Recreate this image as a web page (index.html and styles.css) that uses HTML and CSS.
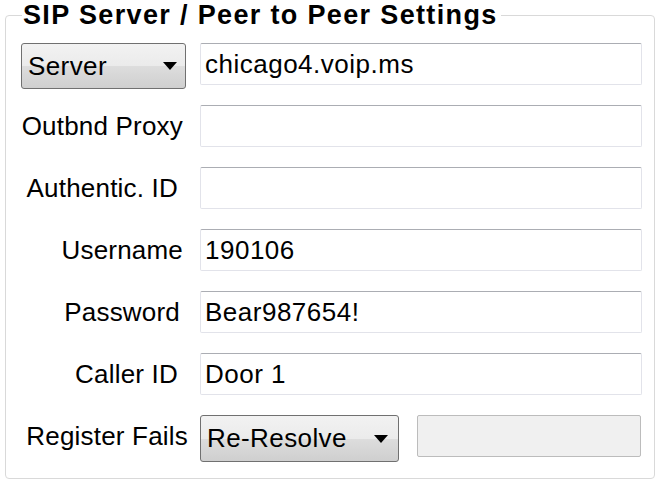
FILE: index.html
```html
<!DOCTYPE html>
<html>
<head>
<meta charset="utf-8">
<link rel="stylesheet" href="styles.css">
</head>
<body>
<fieldset class="group">
  <legend class="group-title">SIP Server / Peer to Peer Settings</legend>
  <div class="form">
    <div class="combo"><span class="combo-text">Server</span><span class="arrow"></span></div>
    <div class="field">chicago4.voip.ms</div>

    <div class="label">Outbnd Proxy</div>
    <div class="field"></div>

    <div class="label lbl-short">Authentic. ID</div>
    <div class="field"></div>

    <div class="label">Username</div>
    <div class="field">190106</div>

    <div class="label lbl-mid">Password</div>
    <div class="field">Bear987654!</div>

    <div class="label lbl-short">Caller ID</div>
    <div class="field">Door 1</div>

    <div class="label lbl-wide">Register Fails</div>
    <div class="split">
      <div class="combo combo-small"><span class="combo-text">Re-Resolve</span><span class="arrow"></span></div>
      <div class="field field-disabled"></div>
    </div>
  </div>
</fieldset>
</body>
</html>
```
FILE: styles.css
```css
html, body {
  margin: 0;
  padding: 0;
  background: #ffffff;
}
body {
  width: 658px;
  height: 483px;
  overflow: hidden;
  font-family: "Liberation Sans", Arial, sans-serif;
  color: #000;
}
.group {
  margin: 0 0 0 5px;
  width: 650px;
  height: 479px;
  box-sizing: border-box;
  border: 1px solid #d9d9d9;
  border-radius: 4px;
  padding: 0 12px 0 15px;
}
.group-title {
  font-weight: bold;
  font-size: 27px;
  line-height: 30px;
  padding: 0 3px 0 1px;
  margin-left: 1px;
  letter-spacing: 1.35px;
}
.form {
  display: grid;
  grid-template-columns: 165px 442px;
  grid-auto-rows: 42px;
  column-gap: 14px;
  row-gap: 20px;
  margin-top: 13px;
}
.label {
  font-size: 26px;
  letter-spacing: 0.2px;
  text-align: right;
  align-self: center;
  padding-right: 3px;
  white-space: nowrap;
}
.lbl-short { padding-right: 8px; }
.lbl-mid { padding-right: 6px; }
.lbl-wide { padding-right: 0; margin-right: -2px; }
.field {
  box-sizing: border-box;
  height: 42px;
  border: 1px solid #e2e3ea;
  border-top-color: #abadb3;
  border-radius: 2px;
  background: #fff;
  font-size: 26px;
  letter-spacing: 0.5px;
  line-height: 40px;
  padding-left: 4px;
  white-space: nowrap;
}
.field-disabled {
  background: #f0f0f0;
  border-color: #bcbcbc;
  height: 42px;
}
.combo {
  box-sizing: border-box;
  height: 46px;
  border: 1px solid #707070;
  border-radius: 3px;
  background: linear-gradient(#f2f2f2 0%, #ebebeb 50%, #dddddd 51%, #cfcfcf 100%);
  display: flex;
  align-items: center;
  justify-content: space-between;
  padding: 0 8px 0 6px;
  font-size: 26px;
  letter-spacing: 0.4px;
}
.combo-text {
  white-space: nowrap;
}
.arrow {
  width: 0;
  height: 0;
  border-left: 7px solid transparent;
  border-right: 7px solid transparent;
  border-top: 8px solid #000;
}
.split {
  display: grid;
  grid-template-columns: 199px 224px;
  column-gap: 18px;
}
.combo-small {
  height: 47px;
  padding-right: 10px;
}
```
